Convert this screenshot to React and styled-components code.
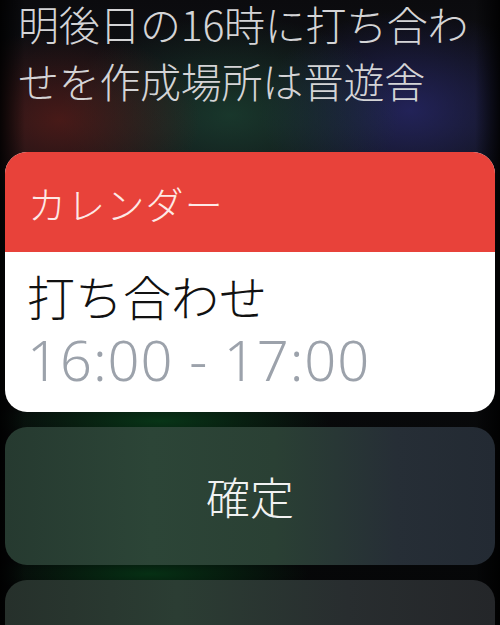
import React from "react";
import styled, { createGlobalStyle } from "styled-components";

const GlobalStyle = createGlobalStyle`
  html, body {
    margin: 0;
    padding: 0;
    background: #050608;
  }
  * {
    box-sizing: border-box;
  }
`;

const Screen = styled.div`
  width: 500px;
  height: 625px;
  overflow: hidden;
  position: relative;
  padding: 0 5px;
  display: flex;
  flex-direction: column;
  font-family: "Noto Sans CJK JP", "Noto Sans", sans-serif;
  background:
    linear-gradient(90deg, rgba(0, 0, 0, 0.85) 0%, rgba(0, 0, 0, 0) 5%, rgba(0, 0, 0, 0) 95%, rgba(0, 0, 0, 0.85) 100%),
    radial-gradient(ellipse 140px 90px at 60px 120px, rgba(90, 28, 24, 0.75), rgba(0, 0, 0, 0) 100%),
    radial-gradient(ellipse 170px 100px at 230px 115px, rgba(28, 70, 52, 0.7), rgba(0, 0, 0, 0) 100%),
    radial-gradient(ellipse 150px 100px at 410px 110px, rgba(40, 40, 110, 0.75), rgba(0, 0, 0, 0) 100%),
    radial-gradient(ellipse 170px 30px at 160px 421px, rgba(8, 60, 25, 0.85), rgba(0, 0, 0, 0) 100%),
    radial-gradient(ellipse 160px 26px at 150px 574px, rgba(6, 55, 22, 0.85), rgba(0, 0, 0, 0) 100%),
    linear-gradient(180deg, #0b0b0e 0%, #111318 20%, #0a0b0d 40%, #050607 100%);
`;

const Transcript = styled.p`
  margin: -5px 0 0 0;
  padding: 0 0 0 13px;
  font-size: 41px;
  font-weight: 300;
  line-height: 57px;
  color: #d4d4d6;
  letter-spacing: -0.3px;
  flex-shrink: 0;
`;

const Card = styled.section`
  margin-top: 43px;
  flex-shrink: 0;
  border-radius: 22px;
  overflow: hidden;
  background: #ffffff;
`;

const CardHeader = styled.header`
  height: 100px;
  display: flex;
  align-items: center;
  padding-left: 23px;
  background: #e8423a;
  color: #fde9e6;
  font-size: 38px;
  font-weight: 300;
  letter-spacing: 1.2px;
`;

const CardBody = styled.div`
  padding: 14px 22px 20px;
  display: flex;
  flex-direction: column;
`;

const EventTitle = styled.div`
  font-size: 48px;
  font-weight: 300;
  line-height: 58px;
  color: #111;
`;

const EventTime = styled.div`
  margin-top: 2px;
  font-family: "Noto Sans", "Liberation Sans", sans-serif;
  font-size: 56px;
  font-weight: 300;
  line-height: 66px;
  color: #9ca2ab;
  letter-spacing: 1px;
`;

const ActionButton = styled.button`
  margin-top: 15px;
  flex-shrink: 0;
  height: ${(p) => p.$height}px;
  border: none;
  border-radius: 22px;
  display: flex;
  align-items: center;
  justify-content: center;
  font-family: "Noto Sans CJK JP", sans-serif;
  font-size: 44px;
  font-weight: 300;
  color: #f2f2f2;
  background: ${(p) =>
    p.$muted
      ? "linear-gradient(90deg, #26302b 0%, #2b3d33 35%, #282d2f 70%, #242629 100%)"
      : "linear-gradient(90deg, #263a30 0%, #2c4537 30%, #2a4034 55%, #262e36 80%, #232a33 100%)"};
`;

export default function App() {
  return (
    <>
      <GlobalStyle />
      <Screen>
        <Transcript>
          明後日の16時に打ち合わ
          <br />
          せを作成場所は晋遊舎
        </Transcript>
        <Card>
          <CardHeader>カレンダー</CardHeader>
          <CardBody>
            <EventTitle>打ち合わせ</EventTitle>
            <EventTime>16:00 - 17:00</EventTime>
          </CardBody>
        </Card>
        <ActionButton $height={138}>確定</ActionButton>
        <ActionButton $height={80} $muted />
      </Screen>
    </>
  );
}
